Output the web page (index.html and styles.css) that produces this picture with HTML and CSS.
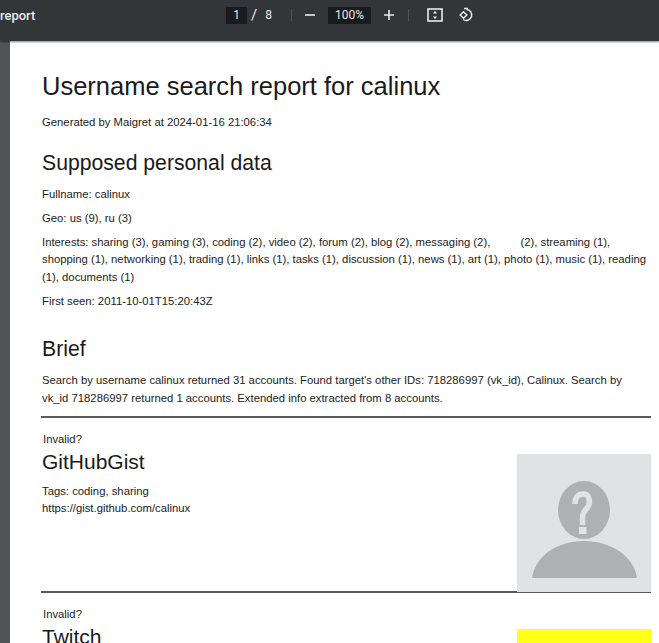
FILE: index.html
```html
<!DOCTYPE html>
<html lang="en">
<head>
    <meta charset="UTF-8">
    <title>report</title>
    <link rel="stylesheet" href="styles.css">
</head>
<body>
    <header class="toolbar">
        <div class="doc-title">report</div>
        <div class="controls">
            <span class="page-box">1</span>
            <span class="slash">/</span>
            <span class="page-total">8</span>
            <span class="divider"></span>
            <svg class="icon zoom-out" width="14" height="14" viewBox="0 0 14 14"><path d="M2 7h10" stroke="#e8eaed" stroke-width="1.6"/></svg>
            <span class="zoom-box">100%</span>
            <svg class="icon zoom-in" width="14" height="14" viewBox="0 0 14 14"><path d="M2 7h10M7 2v10" stroke="#e8eaed" stroke-width="1.6"/></svg>
            <span class="divider divider-right"></span>
            <svg class="icon fit" width="16" height="14" viewBox="0 0 16 14"><rect x="1" y="1" width="14" height="12" fill="none" stroke="#e8eaed" stroke-width="1.6"/><path d="M8 2.8L6 5.400h4zM8 11.200L6 8.600h4z" fill="#e8eaed"/></svg>
            <svg class="icon rotate" width="16" height="16" viewBox="0 0 16 16"><path d="M6 1.500h4M8.500 2.500a5.500 5.500 0 1 1-3.400 10" fill="none" stroke="#e8eaed" stroke-width="1.5"/><path d="M5.500 4.800L2.200 8l3.300 3.200L8.800 8z" fill="none" stroke="#e8eaed" stroke-width="1.5"/></svg>
        </div>
    </header>

    <div class="viewer">
        <main class="page">
            <h1>Username search report for calinux</h1>
            <p class="generated">Generated by Maigret at 2024-01-16 21:06:34</p>

            <h2>Supposed personal data</h2>
            <p>Fullname: calinux</p>
            <p>Geo: us (9), ru (3)</p>
            <p>Interests: sharing (3), gaming (3), coding (2), video (2), forum (2), blog (2), messaging (2), <span class="gap"></span>(2), streaming (1), shopping (1), networking (1), trading (1), links (1), tasks (1), discussion (1), news (1), art (1), photo (1), music (1), reading (1), documents (1)</p>
            <p>First seen: 2011-10-01T15:20:43Z</p>

            <h2 class="brief-title">Brief</h2>
            <p class="brief">Search by username calinux returned 31 accounts. Found target's other IDs: 718286997 (vk_id), Calinux. Search by vk_id 718286997 returned 1 accounts. Extended info extracted from 8 accounts.</p>

            <section class="account">
                <div class="account-info">
                    <div class="invalid">Invalid?</div>
                    <h3>GitHubGist</h3>
                    <p class="tags">Tags: coding, sharing</p>
                    <p class="link">https://gist.github.com/calinux</p>
                </div>
                <div class="avatar">
                    <svg width="134" height="138" viewBox="0 0 134 138">
                        <ellipse cx="67" cy="56" rx="26" ry="29" fill="#adb1b4"/>
                        <path d="M15 124c3-22 25-37 52-37s50 15 53 37z" fill="#adb1b4"/>
                        <path d="M58 50c0-7 3.500-10 8-10s6.500 3.500 6.500 8c0 4-2 6-4 8-2 2-3 4-3 8v7" fill="none" stroke="#e0e3e5" stroke-width="5.500"/>
                        <rect x="62" y="73" width="7.500" height="7" fill="#e0e3e5"/>
                    </svg>
                </div>
            </section>

            <section class="account">
                <div class="account-info">
                    <div class="invalid">Invalid?</div>
                    <h3>Twitch</h3>
                </div>
                <div class="avatar-yellow"></div>
            </section>
        </main>
    </div>
</body>
</html>
```

FILE: styles.css
```css
* {
    margin: 0;
    padding: 0;
    box-sizing: border-box;
}

html, body {
    height: 100%;
    overflow: hidden;
}

body {
    background-color: #505457;
    font-family: "Liberation Sans", Arial, sans-serif;
    color: #222;
}

.toolbar {
    height: 41px;
    background-color: #323639;
    display: flex;
    align-items: center;
    position: relative;
    padding-bottom: 11px;
    color: #e8eaed;
    box-shadow: 0 1px 2px rgba(0, 0, 0, 0.5);
}

.doc-title {
    width: 36px;
    font-family: "Roboto", sans-serif;
    font-size: 13px;
    font-weight: 500;
}

.controls {
    display: flex;
    align-items: center;
    margin-left: 190px;
    font-family: "Roboto", sans-serif;
    font-size: 12px;
}

.page-box {
    width: 21px;
    height: 17px;
    line-height: 17px;
    background-color: #191b1c;
    text-align: center;
    font-size: 12px;
}

.slash {
    margin-left: 4px;
    font-size: 15px;
}

.page-total {
    margin-left: 8px;
    font-size: 12px;
}

.divider {
    width: 1px;
    height: 12px;
    background-color: #50555a;
    margin-left: 19px;
}

.zoom-out {
    margin-left: 11px;
}

.zoom-box {
    width: 43px;
    height: 17px;
    line-height: 17px;
    background-color: #191b1c;
    text-align: center;
    font-size: 12px;
    margin-left: 11px;
}

.zoom-in {
    margin-left: 11px;
}

.divider-right {
    margin-left: 12px;
}

.fit {
    margin-left: 18px;
}

.rotate {
    margin-left: 15px;
}

.viewer {
    padding-left: 10px;
}

.page {
    background-color: #fff;
    height: 602px;
    padding: 30px 8px 0 32px;
    overflow: hidden;
    font-size: 11.3px;
    line-height: 17.5px;
}

h1 {
    font-size: 25.5px;
    font-weight: 400;
    line-height: 30px;
    color: #1a1a1a;
}

.generated {
    margin-top: 13px;
}

h2 {
    font-size: 21.2px;
    font-weight: 400;
    line-height: 26px;
    color: #1a1a1a;
    margin-top: 18px;
    margin-bottom: 10px;
}

p {
    margin-bottom: 6.5px;
}

.gap {
    display: inline-block;
    width: 27px;
}

.brief-title {
    margin-top: 26px;
    margin-bottom: 10px;
}

.brief {
    margin-bottom: 9px;
}

.account {
    display: flex;
    justify-content: space-between;
    border-top: 2px solid #5a5a5a;
    margin-left: -1px;
    height: 175px;
    padding-top: 13px;
}

.account-info {
    margin-left: 1px;
}

.invalid {
    margin-left: 1px;
}

h3 {
    font-size: 21px;
    font-weight: 400;
    line-height: 26px;
    color: #1a1a1a;
    margin-bottom: 8px;
}

.tags, .link {
    margin-bottom: 0;
}

.avatar, .avatar-yellow {
    width: 134px;
    height: 138px;
    margin-top: 23px;
    background-color: #e0e3e5;
}

.avatar svg {
    display: block;
}

.avatar-yellow {
    background-color: #ffff17;
}
```
